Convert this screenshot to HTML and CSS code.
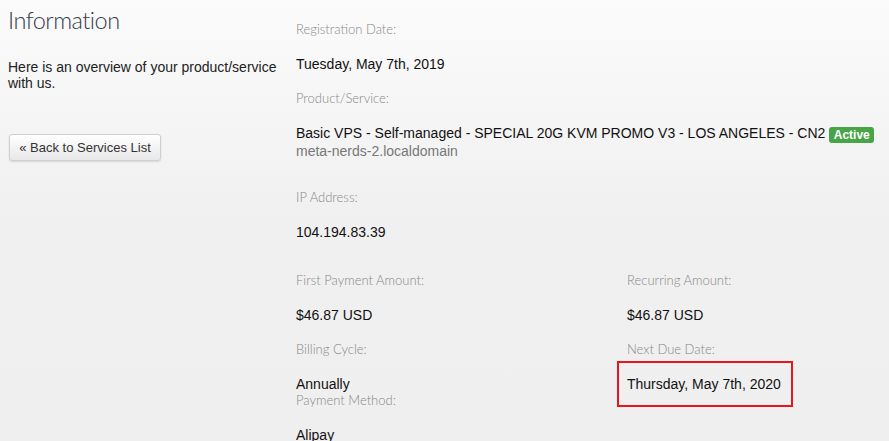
FILE: index.html
```html
<!DOCTYPE html>
<html>
<head>
<meta charset="utf-8">
<link rel="stylesheet" href="styles.css">
</head>
<body>
<div class="page">
  <aside class="sidebar">
    <h1 class="title">Information</h1>
    <p class="intro">Here is an overview of your product/service with us.</p>
    <button class="btn">« Back to Services List</button>
  </aside>
  <main class="details">
    <div class="field">
      <div class="label">Registration Date:</div>
      <div class="value">Tuesday, May 7th, 2019</div>
    </div>
    <div class="field">
      <div class="label">Product/Service:</div>
      <div class="value">Basic VPS - Self-managed - SPECIAL 20G KVM PROMO V3 - LOS ANGELES - CN2 <span class="badge">Active</span><br><span class="muted">meta-nerds-2.localdomain</span></div>
    </div>
    <div class="field field-gap">
      <div class="label">IP Address:</div>
      <div class="value">104.194.83.39</div>
    </div>
    <div class="grid grid-gap">
      <div class="col">
        <div class="field">
          <div class="label">First Payment Amount:</div>
          <div class="value">$46.87 USD</div>
        </div>
        <div class="field">
          <div class="label">Billing Cycle:</div>
          <div class="value tight">Annually</div>
        </div>
        <div class="field">
          <div class="label">Payment Method:</div>
          <div class="value">Alipay</div>
        </div>
      </div>
      <div class="col">
        <div class="field">
          <div class="label">Recurring Amount:</div>
          <div class="value">$46.87 USD</div>
        </div>
        <div class="field">
          <div class="label">Next Due Date:</div>
          <div class="value"><span class="highlight">Thursday, May 7th, 2020</span></div>
        </div>
      </div>
    </div>
  </main>
</div>
</body>
</html>
```
FILE: styles.css
```css
html, body {
  margin: 0;
  padding: 0;
  height: 100%;
  overflow: hidden;
}
body {
  background: linear-gradient(#fbfbfb 0px, #f0f0f0 220px, #efefef 100%);
  font-family: "Liberation Sans", Arial, sans-serif;
  font-size: 14px;
  color: #222;
}
.page {
  display: grid;
  grid-template-columns: 288px 1fr;
  padding-left: 8px;
}
.sidebar {
  display: flex;
  flex-direction: column;
  align-items: flex-start;
}
.title {
  margin: 5px 0 0 0;
  font-family: Lato, "Open Sans", sans-serif;
  font-weight: 300;
  font-size: 23.5px;
  letter-spacing: -0.5px;
  line-height: 30px;
  color: #333c48;
}
.intro {
  margin: 24px 0 0 0;
  line-height: 16px;
  width: 275px;
  color: #222;
}
.btn {
  margin: 43px 0 0 1px;
  width: 152px;
  height: 27px;
  padding: 0;
  font-family: "Liberation Sans", Arial, sans-serif;
  font-size: 13px;
  color: #333;
  background: linear-gradient(#ffffff, #e8e8e8);
  border: 1px solid #cfcfcf;
  border-radius: 3px;
  box-shadow: 0 1px 2px rgba(0,0,0,0.12);
}
.details {
  padding-top: 21px;
}
.field {
  display: flex;
  flex-direction: column;
  align-items: flex-start;
}
.label {
  font-family: Lato, "Open Sans", sans-serif;
  font-weight: 300;
  font-size: 13px;
  line-height: 16px;
  color: #888;
  margin-bottom: 19px;
}
.value {
  line-height: 16px;
  color: #111;
  margin-bottom: 18px;
}
.value.tight {
  margin-bottom: 0;
}
.field-gap {
  margin-top: 12px;
}
.grid-gap {
  margin-top: 14px;
}
.muted {
  color: #777;
}
.badge {
  display: inline-block;
  background: #47a447;
  color: #fff;
  font-weight: bold;
  font-size: 12px;
  line-height: 16px;
  padding: 0 4.5px;
  border-radius: 3px;
  vertical-align: -1px;
}
.grid {
  display: grid;
  grid-template-columns: 331px 1fr;
}
.highlight {
  display: inline-block;
  margin: -15px 0 -15px -10px;
  padding: 13px 10px 13px 8px;
  border: 2px solid #e8141e;
}
```
